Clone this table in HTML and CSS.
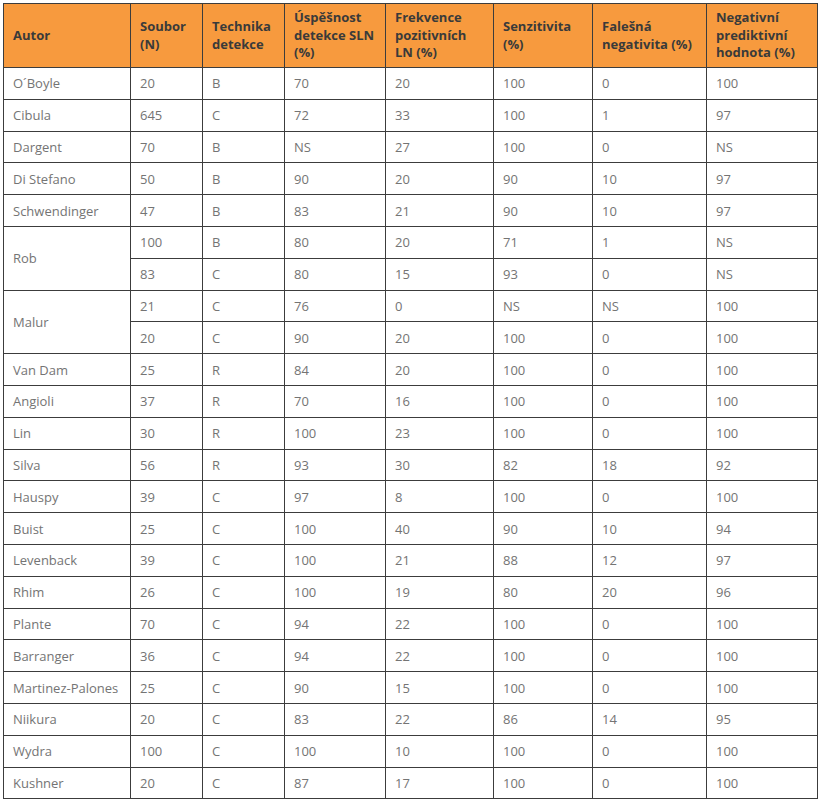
FILE: index.html
```html
<!DOCTYPE html>
<html lang="cs">
<head>
  <meta charset="UTF-8">
  <title>Detekce SLN</title>
  <link rel="stylesheet" href="styles.css">
</head>
<body>
  <table class="data-table">
    <colgroup>
      <col class="c-autor">
      <col class="c-soubor">
      <col class="c-tech">
      <col class="c-uspech">
      <col class="c-frek">
      <col class="c-senz">
      <col class="c-fal">
      <col class="c-npv">
    </colgroup>
    <thead>
      <tr>
        <th>Autor</th>
        <th>Soubor (N)</th>
        <th>Technika detekce</th>
        <th>Úspěšnost detekce SLN (%)</th>
        <th>Frekvence pozitivních LN (%)</th>
        <th>Senzitivita (%)</th>
        <th>Falešná negativita (%)</th>
        <th>Negativní prediktivní hodnota (%)</th>
      </tr>
    </thead>
    <tbody>
      <tr><td>O´Boyle</td><td>20</td><td>B</td><td>70</td><td>20</td><td>100</td><td>0</td><td>100</td></tr>
      <tr><td>Cibula</td><td>645</td><td>C</td><td>72</td><td>33</td><td>100</td><td>1</td><td>97</td></tr>
      <tr><td>Dargent</td><td>70</td><td>B</td><td>NS</td><td>27</td><td>100</td><td>0</td><td>NS</td></tr>
      <tr><td>Di Stefano</td><td>50</td><td>B</td><td>90</td><td>20</td><td>90</td><td>10</td><td>97</td></tr>
      <tr><td>Schwendinger</td><td>47</td><td>B</td><td>83</td><td>21</td><td>90</td><td>10</td><td>97</td></tr>
      <tr><td rowspan="2">Rob</td><td>100</td><td>B</td><td>80</td><td>20</td><td>71</td><td>1</td><td>NS</td></tr>
      <tr><td>83</td><td>C</td><td>80</td><td>15</td><td>93</td><td>0</td><td>NS</td></tr>
      <tr><td rowspan="2">Malur</td><td>21</td><td>C</td><td>76</td><td>0</td><td>NS</td><td>NS</td><td>100</td></tr>
      <tr><td>20</td><td>C</td><td>90</td><td>20</td><td>100</td><td>0</td><td>100</td></tr>
      <tr><td>Van Dam</td><td>25</td><td>R</td><td>84</td><td>20</td><td>100</td><td>0</td><td>100</td></tr>
      <tr><td>Angioli</td><td>37</td><td>R</td><td>70</td><td>16</td><td>100</td><td>0</td><td>100</td></tr>
      <tr><td>Lin</td><td>30</td><td>R</td><td>100</td><td>23</td><td>100</td><td>0</td><td>100</td></tr>
      <tr><td>Silva</td><td>56</td><td>R</td><td>93</td><td>30</td><td>82</td><td>18</td><td>92</td></tr>
      <tr><td>Hauspy</td><td>39</td><td>C</td><td>97</td><td>8</td><td>100</td><td>0</td><td>100</td></tr>
      <tr><td>Buist</td><td>25</td><td>C</td><td>100</td><td>40</td><td>90</td><td>10</td><td>94</td></tr>
      <tr><td>Levenback</td><td>39</td><td>C</td><td>100</td><td>21</td><td>88</td><td>12</td><td>97</td></tr>
      <tr><td>Rhim</td><td>26</td><td>C</td><td>100</td><td>19</td><td>80</td><td>20</td><td>96</td></tr>
      <tr><td>Plante</td><td>70</td><td>C</td><td>94</td><td>22</td><td>100</td><td>0</td><td>100</td></tr>
      <tr><td>Barranger</td><td>36</td><td>C</td><td>94</td><td>22</td><td>100</td><td>0</td><td>100</td></tr>
      <tr><td>Martinez-Palones</td><td>25</td><td>C</td><td>90</td><td>15</td><td>100</td><td>0</td><td>100</td></tr>
      <tr><td>Niikura</td><td>20</td><td>C</td><td>83</td><td>22</td><td>86</td><td>14</td><td>95</td></tr>
      <tr><td>Wydra</td><td>100</td><td>C</td><td>100</td><td>10</td><td>100</td><td>0</td><td>100</td></tr>
      <tr><td>Kushner</td><td>20</td><td>C</td><td>87</td><td>17</td><td>100</td><td>0</td><td>100</td></tr>
    </tbody>
  </table>
</body>
</html>
```

FILE: styles.css
```css
body {
  margin: 0;
  padding: 3px;
  background-color: #ffffff;
  font-family: "Open Sans", "Liberation Sans", sans-serif;
}

.data-table {
  width: 814px;
  table-layout: fixed;
  border-collapse: collapse;
  font-size: 13px;
}

.c-autor { width: 127px; }
.c-soubor { width: 72px; }
.c-tech { width: 82px; }
.c-uspech { width: 101px; }
.c-frek { width: 108px; }
.c-senz { width: 99px; }
.c-fal { width: 114px; }
.c-npv { width: 111px; }

.data-table th,
.data-table td {
  border: 1px solid #3c3c3c;
  text-align: left;
  vertical-align: middle;
  padding: 0 9px;
}

.data-table th {
  background-color: #f79a3e;
  color: #3a3a3a;
  font-size: 13px;
  font-weight: bold;
  line-height: 17.5px;
  height: 63px;
}

.data-table td {
  color: #747474;
  height: 30.8px;
  line-height: 16px;
}
```
